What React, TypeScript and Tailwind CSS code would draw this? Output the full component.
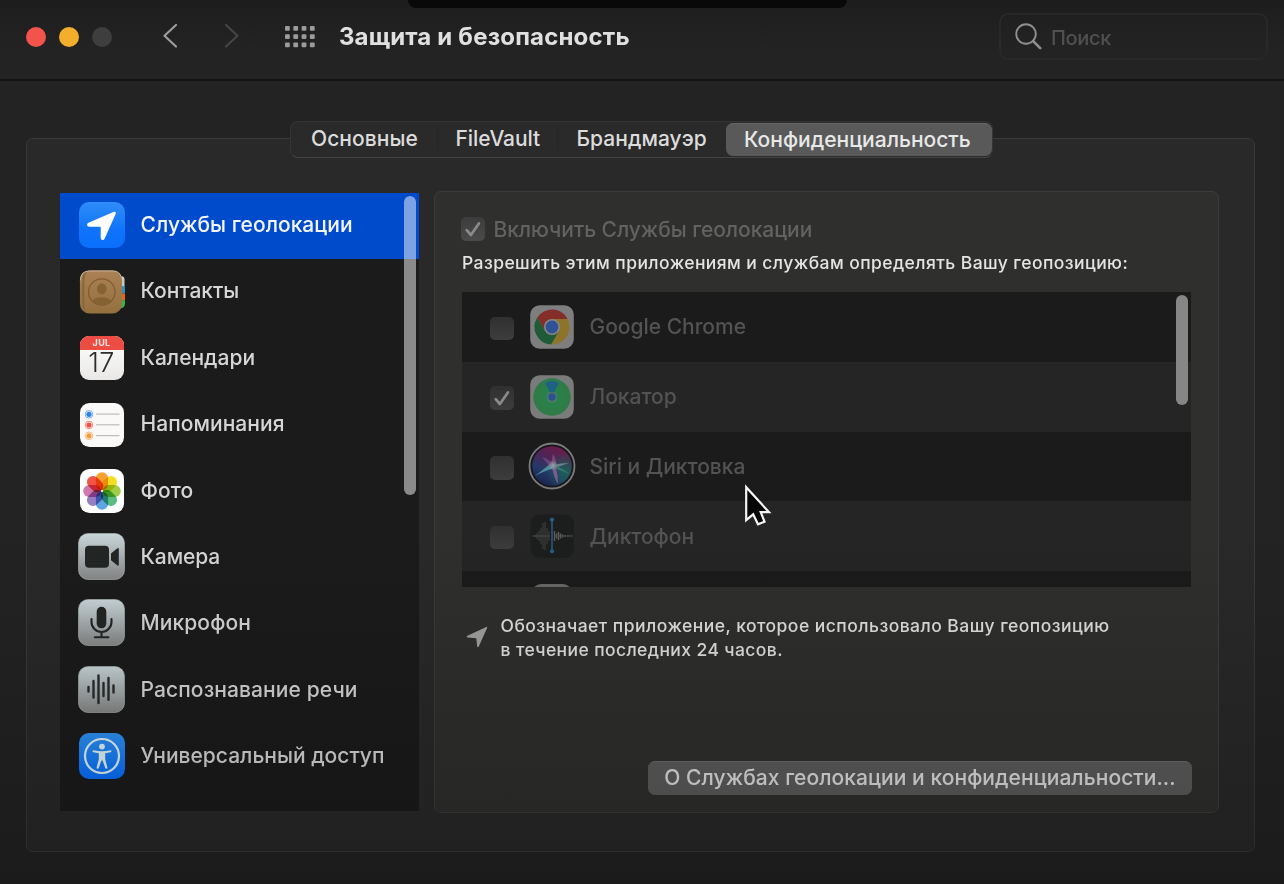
import React from "react";
import type { ReactNode } from "react";

/* ---------- sidebar icons ---------- */

function LocationIcon() {
  return (
    <svg viewBox="0 0 46 46" className="size-[46px]">
      <defs>
        <linearGradient id="loc" x1="0" y1="0" x2="0" y2="1">
          <stop offset="0" stopColor="#2f8df8" />
          <stop offset="0.6" stopColor="#0f74fb" />
          <stop offset="1" stopColor="#0a6ffb" />
        </linearGradient>
      </defs>
      <rect width="46" height="46" rx="10" fill="url(#loc)" />
      <path
        d="M35 9.800c1.200-.500 2.300.500 1.800 1.700L25.600 36.800c-.9 1.900-3.900 1.500-3.900-.8V25.500c0-.6-.2-.8-.8-.8H10.200c-2.400 0-2.800-3-.8-3.900z"
        fill="#fff"
      />
    </svg>
  );
}

function ContactsIcon() {
  return (
    <svg viewBox="0 0 48 46" className="h-[46px] w-[48px]">
      <defs>
        <linearGradient id="book" x1="0" y1="0" x2="0" y2="1">
          <stop offset="0" stopColor="#aa8154" />
          <stop offset="1" stopColor="#95703f" />
        </linearGradient>
        <clipPath id="person">
          <circle cx="24.300" cy="23" r="13" />
        </clipPath>
      </defs>
      <rect x="36" y="7" width="11.500" height="12" rx="3" fill="#c9cbc8" />
      <rect x="36" y="17" width="12" height="7.500" fill="#2f8fc4" />
      <rect x="36" y="24.500" width="12" height="7" fill="#e06a16" />
      <path d="M36 31.500h12v3.500q0 3.500-3.500 4.500h-8.500z" fill="#35b648" />
      <rect x="2" y="1" width="43" height="44" rx="10" fill="url(#book)" />
      <path d="M2.500 11Q2.500 1.600 11.500 1.500h24q7 0 8.500 6" stroke="#c9b79d" strokeWidth="1" fill="none" />
      <path d="M4.500 8q-1 15 0 30q1 4 4 5.500q-2-4-2-9.500V12q0-6 2.500-9.500q-3.500 1-4.500 5.500" fill="#8b673d" />
      <g clipPath="url(#person)" fill="#80602f" opacity="0.850">
        <ellipse cx="24.300" cy="19.800" rx="4.900" ry="5.700" />
        <ellipse cx="24.300" cy="33.500" rx="10" ry="5.200" />
      </g>
      <circle cx="24.300" cy="23" r="13.500" stroke="#7f5d31" strokeWidth="1.300" fill="none" />
    </svg>
  );
}

function CalendarIcon() {
  return (
    <div className="flex h-[44px] w-[44px] flex-col overflow-hidden rounded-[9px] bg-linear-to-b from-white to-[#e9e8e6]">
      <div className="flex h-[14px] items-center justify-center bg-[#ed4c43] text-[9px] leading-[14px] font-bold tracking-[0.300px] text-[#fbe9e8]">
        JUL
      </div>
      <div className="-mt-[2px] text-center text-[27px] leading-[29px] font-light tracking-[0.400px] text-[#2c2c2c]">17</div>
    </div>
  );
}

function RemindersIcon() {
  const rows = [
    { y: 11.300, c: "#2f82e4" },
    { y: 22, c: "#ea5348" },
    { y: 32.800, c: "#ef9c3c" },
  ];
  return (
    <svg viewBox="0 0 44 44" className="size-[44px]">
      <rect width="44" height="44" rx="9.500" fill="#faf9f8" />
      {rows.map((r) => (
        <g key={r.y}>
          <circle cx="9" cy={r.y} r="3.800" fill="none" stroke={r.c} strokeOpacity="0.700" strokeWidth="0.900" />
          <circle cx="9" cy={r.y} r="2.600" fill={r.c} />
          <rect x="16" y={r.y - 0.800} width="23.500" height="1.200" fill="#bdbcbb" />
        </g>
      ))}
    </svg>
  );
}

function PhotosIcon() {
  const petals = ["#f59a23", "#f2dc12", "#9ccb3c", "#4fb87a", "#559fe0", "#9076bd", "#cf6fa8", "#f04a3c"];
  return (
    <svg viewBox="0 0 44 44" className="size-[44px]">
      <rect width="44" height="44" rx="9.500" fill="#fff" />
      <g className="isolate">
        {petals.map((c, i) => (
          <rect
            key={c}
            x="15.900"
            y="3.200"
            width="12.200"
            height="18.200"
            rx="6.100"
            fill={c}
            fillOpacity="0.940"
            transform={`rotate(${i * 45} 22 22)`}
            className="mix-blend-multiply"
          />
        ))}
      </g>
      <circle cx="22" cy="22" r="1" fill="#fff" />
    </svg>
  );
}

function SilverTile({ children }: { children: ReactNode }) {
  return (
    <svg viewBox="0 0 47 47" className="-mt-[2px] size-[47px]">
      <defs>
        <linearGradient id="silver" x1="0" y1="0" x2="0" y2="1">
          <stop offset="0" stopColor="#cad7da" />
          <stop offset="0.500" stopColor="#a9b0b2" />
          <stop offset="1" stopColor="#868686" />
        </linearGradient>
      </defs>
      <rect x="0.500" y="0.500" width="46" height="46" rx="9.500" fill="url(#silver)" stroke="#b4bcbe" strokeOpacity="0.600" />
      {children}
    </svg>
  );
}

function CameraIcon() {
  return (
    <SilverTile>
      <rect x="7" y="12.700" width="24" height="22" rx="4" fill="#242626" />
      <path d="M33 20.500l5.800-4.800q2-1.500 2-.2v16.400q0 1.500-2 .2L33 27.300z" fill="#242626" />
    </SilverTile>
  );
}

function MicIcon() {
  return (
    <SilverTile>
      <rect x="18.700" y="7.800" width="9.600" height="21.500" rx="4.800" fill="#242626" />
      <path
        d="M13.500 20v3a10 10 0 0 0 20 0v-3M23.500 33v5M16.800 38.300h13.600"
        stroke="#242626"
        strokeWidth="2.100"
        strokeLinecap="round"
        fill="none"
      />
    </SilverTile>
  );
}

function SpeechIcon() {
  return (
    <SilverTile>
      <path
        d="M10.500 21v4.500M15.500 15v16.500M20.500 9.500v27.500M25.500 17v13M30.500 12v21.700M35.500 19.500v7"
        stroke="#2a2c2c"
        strokeWidth="2.400"
        strokeLinecap="round"
        fill="none"
      />
    </SilverTile>
  );
}

function AccessibilityIcon() {
  return (
    <svg viewBox="0 0 46 46" className="-mt-[1px] size-[46px]">
      <defs>
        <linearGradient id="acc" x1="0" y1="0" x2="0" y2="1">
          <stop offset="0" stopColor="#2f93f6" />
          <stop offset="1" stopColor="#0670ff" />
        </linearGradient>
      </defs>
      <rect width="46" height="46" rx="10" fill="url(#acc)" />
      <circle cx="23" cy="23" r="17" fill="none" stroke="#e4f6f6" strokeWidth="2.200" />
      <circle cx="23" cy="13.600" r="2.900" fill="#e4f6f6" />
      <path
        d="M14.600 17.300q8.400 2 16.800 0q1 0 1 .9t-.9 1.100l-5.300 1v6l2.200 8.200q.2 1.100-.8 1.300t-1.400-.8L23.600 27.400h-1.200l-2.600 7.600q-.4 1-1.400.8t-.8-1.300l2.200-8.200v-6l-5.300-1q-.9-.2-.9-1.100t1-.9z"
        fill="#e4f6f6"
      />
    </svg>
  );
}

/* ---------- app icons ---------- */

function ChromeIcon() {
  return (
    <svg viewBox="-22 -22 44 44" className="size-[44px]">
      <rect x="-21.800" y="-21.800" width="43.600" height="43.600" rx="9.500" fill="#7e7e7e" />
      <path d="M-14.710-9.480A17.500 17.500 0 0 1 15.560-8L0-8L-6.930 4z" fill="#852d29" />
      <path d="M15.560-8A17.500 17.500 0 0 1-.85 17.480L6.930 4L0-8z" fill="#8e7428" />
      <path d="M-.85 17.480A17.500 17.500 0 0 1-14.710-9.480L-6.930 4L6.930 4z" fill="#1f5c35" />
      <circle r="8" fill="#878787" />
      <circle r="6.400" fill="#2f5196" />
    </svg>
  );
}

function FindMyIcon() {
  return (
    <svg viewBox="-22 -22 44 44" className="size-[44px]">
      <rect x="-21.800" y="-21.800" width="43.600" height="43.600" rx="9.500" fill="#7a7c7b" />
      <circle r="18.700" fill="#2f7c49" />
      <circle r="12" fill="#2a8049" />
      <path d="M0 0L-6.800-14Q0-18 6.800-14z" fill="#1d6285" />
      <circle r="5.200" fill="#7d8f8a" />
      <circle r="3.700" fill="#28538f" />
      <circle r="4.400" fill="none" stroke="#284d52" strokeWidth="0.700" />
    </svg>
  );
}

function SiriIcon() {
  return (
    <svg viewBox="-24 -24 48 48" className="size-[48px]">
      <defs>
        <linearGradient id="siri" x1="0.700" y1="0" x2="0.250" y2="1">
          <stop offset="0" stopColor="#6b1c48" />
          <stop offset="0.350" stopColor="#4f2457" />
          <stop offset="0.650" stopColor="#233a68" />
          <stop offset="1" stopColor="#17244d" />
        </linearGradient>
        <radialGradient id="teal" cx="0.850" cy="0.650" r="0.500">
          <stop offset="0" stopColor="#1c6157" />
          <stop offset="1" stopColor="#1c6157" stopOpacity="0" />
        </radialGradient>
        <radialGradient id="glow">
          <stop offset="0" stopColor="#98a3ab" />
          <stop offset="1" stopColor="#98a3ab" stopOpacity="0" />
        </radialGradient>
        <filter id="soft">
          <feGaussianBlur stdDeviation="0.500" />
        </filter>
      </defs>
      <circle r="22.500" fill="#17161c" stroke="#7c7c7c" strokeWidth="1.800" />
      <circle r="19.800" fill="url(#siri)" />
      <circle r="19.800" fill="url(#teal)" />
      <g filter="url(#soft)">
        <path d="M-17.500 10.500L-2-2L3 2Q-8 4.500-17.500 10.500z" fill="#4f8c9b" />
        <path d="M-10-9Q0-6 3 0L-2 1z" fill="#744d82" opacity="0.700" />
        <path d="M1-12Q5-6 4 1L-1-1z" fill="#86507c" opacity="0.800" />
        <path d="M17-3Q8-3 2-1l1 3z" fill="#68808c" />
        <path d="M18 8Q10 5 1 1.500l1-3.500z" fill="#39796f" />
        <path d="M6 18Q6 8 3.500 0L0 1Q2 12 6 18z" fill="#795b94" />
      </g>
      <circle cx="1" cy="-0.500" r="5" fill="url(#glow)" />
    </svg>
  );
}

function VoiceMemosIcon() {
  return (
    <svg viewBox="-22 -22 44 44" className="size-[44px]">
      <rect x="-21.500" y="-21.500" width="43.500" height="43.500" rx="9.500" fill="#1c1d1d" />
      <path
        d="M-19-.7v1.400M-17-1v2M-15-3v6M-13-5v10M-11-8v16M-9-13v26M-7-14v28M-5-8v16M-3-5v10"
        stroke="#343636"
        strokeWidth="1.500"
      />
      <path d="M2.500-5v10M4.500-2.500v5M6.500-4v8M8.500-2.500v5M10.500-1.500v3M13-1v2M16-.8v1.600M19-.5v1" stroke="#5a5e5e" strokeWidth="1.400" />
      <path d="M-19 0H-2M2 0H21" stroke="#4a4c4c" strokeWidth="0.900" />
      <path d="M0-16V15" stroke="#285d83" strokeWidth="1.500" />
      <circle cy="-16.300" r="2.100" fill="#285d83" />
      <circle cy="15.300" r="2.100" fill="#285d83" />
    </svg>
  );
}

function Checkbox({ checked, className = "" }: { checked: boolean; className?: string }) {
  return (
    <span
      className={`flex size-[23.500px] shrink-0 items-center justify-center rounded-[5px] bg-linear-to-b ${className}`}
    >
      {checked && (
        <svg viewBox="0 0 22 22" className="size-[22px]">
          <path d="M4.700 12.200l4.200 4.800L16.900 5.400" fill="none" stroke="#8a8a8a" strokeWidth="2.700" strokeLinecap="round" strokeLinejoin="round" />
        </svg>
      )}
    </span>
  );
}

/* ---------- data ---------- */

const sections: { label: string; icon: ReactNode; tracking: string }[] = [
  { label: "Службы геолокации", icon: <LocationIcon />, tracking: "tracking-[0.030px]" },
  { label: "Контакты", icon: <ContactsIcon />, tracking: "" },
  { label: "Календари", icon: <CalendarIcon />, tracking: "" },
  { label: "Напоминания", icon: <RemindersIcon />, tracking: "tracking-[0.050px]" },
  { label: "Фото", icon: <PhotosIcon />, tracking: "tracking-[0.100px]" },
  { label: "Камера", icon: <CameraIcon />, tracking: "tracking-[-0.100px]" },
  { label: "Микрофон", icon: <MicIcon />, tracking: "tracking-[0.100px]" },
  { label: "Распознавание речи", icon: <SpeechIcon />, tracking: "tracking-[0.100px]" },
  { label: "Универсальный доступ", icon: <AccessibilityIcon />, tracking: "" },
];

const apps: { label: string; icon: ReactNode; on: boolean }[] = [
  { label: "Google Chrome", icon: <ChromeIcon />, on: false },
  { label: "Локатор", icon: <FindMyIcon />, on: true },
  { label: "Siri и Диктовка", icon: <SiriIcon />, on: false },
  { label: "Диктофон", icon: <VoiceMemosIcon />, on: false },
];

/* ---------- page ---------- */

function Toolbar() {
  return (
    <header className="flex h-[81px] shrink-0 items-start border-b-2 border-[#161616] bg-linear-to-b from-[#1d1d1d] to-[#232323] to-60% pl-[25.500px] pr-[16px]">
      <div className="mt-[26.500px] flex gap-[13.200px]">
        <span className="size-[20px] rounded-full bg-[#f2534b]" />
        <span className="size-[20px] rounded-full bg-[#f3af2c]" />
        <span className="size-[20px] rounded-full bg-[#3e3e3e]" />
      </div>
      <svg viewBox="0 0 14 24" className="mt-[24px] ml-[51px] h-[24px] w-[14px]">
        <path d="M13 1L1.500 11.700L13 22.500" fill="none" stroke="#9c9c9c" strokeWidth="2.200" strokeLinecap="round" strokeLinejoin="round" />
      </svg>
      <svg viewBox="0 0 14 24" className="mt-[24px] ml-[48px] h-[24px] w-[14px]">
        <path d="M1 1L12.500 11.700L1 22.500" fill="none" stroke="#454545" strokeWidth="2.200" strokeLinecap="round" strokeLinejoin="round" />
      </svg>
      <svg viewBox="0 0 30 22" className="mt-[25.500px] ml-[46px] h-[22px] w-[30px]" fill="#9b9b9b">
        {Array.from({ length: 12 }, (_, i) => (
          <rect key={i} x={(i % 4) * 8.300} y={Math.floor(i / 4) * 8.200} width="4.800" height="4.800" rx="1" />
        ))}
      </svg>
      <h1 className="mt-[22px] ml-[24px] text-[24px] leading-[30px] font-bold tracking-[0.180px] text-[#e0e0e0]">Защита и безопасность</h1>
      <div className="mt-[13px] ml-auto flex h-[47px] w-[269px] items-center rounded-[9px] border-2 border-[#282828] pl-[14px]">
        <svg viewBox="0 0 27 27" className="size-[27px]">
          <circle cx="11" cy="11" r="9.800" fill="none" stroke="#8f8f8f" strokeWidth="1.900" />
          <path d="M18.200 18.200l7 7" stroke="#8f8f8f" strokeWidth="2.600" strokeLinecap="round" />
        </svg>
        <span className="mt-[3px] ml-[9px] text-[20px] leading-[24px] font-medium tracking-[-0.300px] text-[#505050]">Поиск</span>
      </div>
    </header>
  );
}

function Tabs() {
  return (
    <nav className="relative z-10 mx-auto flex h-[37px] w-[703px] -translate-x-px items-stretch rounded-[8px] border border-[#353535] border-b-[#454545] bg-[#2a2a2a] text-[21px] leading-[33px] font-medium text-[#dcdcdc]">
      <span className="w-[146px] pl-[20.500px] tracking-[0.060px]">Основные</span>
      <span className="my-[7px] w-px bg-[#262626]" />
      <span className="w-[119px] pl-[18px] tracking-[-0.070px]">FileVault</span>
      <span className="my-[7px] w-px bg-[#262626]" />
      <span className="w-[168px] pl-[19px] tracking-[0.030px]">Брандмауэр</span>
      <span className="my-px flex-1 rounded-[7px] border-t border-[#666666] bg-[#595959] pl-[18.500px] leading-[31px] text-[#e8e8e8]">
        Конфиденциальность
      </span>
    </nav>
  );
}

function Sidebar() {
  return (
    <aside className="relative mt-[2px] h-[618px] w-[359px] shrink-0 bg-[#1b1b1b]">
      <ul>
        {sections.map((s, i) => (
          <li
            key={s.label}
            className={`flex h-[66.400px] items-center pb-[1.500px] ${i === 0 ? "bg-[#004bcb] text-[#f2f5fb]" : "text-[#d6d6d6]"}`}
          >
            <span className="ml-[18px] flex w-[47px] shrink-0 justify-center">{s.icon}</span>
            <span className={`-mt-[1px] ml-[15.500px] text-[21px] leading-[26px] font-medium whitespace-nowrap ${s.tracking}`}>{s.label}</span>
          </li>
        ))}
      </ul>
      <div className="absolute top-[3px] left-[344px] h-[299px] w-[12px] rounded-full bg-white/49" />
    </aside>
  );
}

function AppList() {
  return (
    <div className="relative mt-[17.500px] ml-[27px] h-[295px] w-[729px] overflow-hidden bg-[#1b1b1b]">
      {apps.map((a, i) => (
        <div key={a.label} className={`flex h-[69.750px] items-center ${i % 2 ? "bg-[#252525]" : "bg-[#1b1b1b]"}`}>
          <Checkbox checked={a.on} className="mt-[3px] ml-[28px] from-[#303030] to-[#3d3d3d]" />
          <span className="ml-[13px] flex w-[50px] shrink-0 justify-center">{a.icon}</span>
          <span className="mt-[1px] ml-[13px] text-[21px] leading-[26px] font-medium tracking-[-0.020px] text-[#535353]">{a.label}</span>
        </div>
      ))}
      <div className="mt-[13px] ml-[70px] h-[40px] w-[40px] rounded-[9px] bg-[#686868]" />
      <div className="absolute top-[3px] left-[713.500px] h-[110px] w-[12px] rounded-full bg-[#868686]" />
    </div>
  );
}

function Details() {
  return (
    <section className="ml-[15px] flex h-[622px] w-[785px] flex-col rounded-[7px] border border-[#3c3c3b] bg-[#2f2f2d]">
      <div className="mt-[25px] ml-[26px] flex items-center">
        <Checkbox checked className="-mt-[2px] from-[#3c3c3c] to-[#4b4b4b]" />
        <span className="ml-[9px] text-[21px] leading-[26px] font-medium tracking-[-0.060px] text-[#626261]">Включить Службы геолокации</span>
      </div>
      <p className="mt-[7.500px] ml-[27px] text-[17.500px] leading-[24px] font-medium tracking-[0.425px] whitespace-nowrap text-[#e4e4e3]">
        Разрешить этим приложениям и службам определять Вашу геопозицию:
      </p>
      <AppList />
      <div className="mt-[27px] ml-[31px] flex">
        <svg viewBox="0 0 22 22" className="mt-[12px] size-[22px]">
          <path d="M20.300 1q1.300-.500.800.9L12.800 20.600q-1.100 1.500-1.700-.3L10.300 12.200L1.700 11.500q-1.900-.6-.3-1.700z" fill="#a0a09f" />
        </svg>
        <p className="ml-[12.500px] text-[17.500px] leading-[23.500px] font-medium tracking-[0.440px] whitespace-nowrap text-[#e0e0df]">
          <span className="tracking-[0.465px]">Обозначает приложение, которое использовало Вашу геопозицию</span>
          <br />
          <span className="tracking-[0.400px]">в течение последних 24 часов.</span>
        </p>
      </div>
      <button className="mt-auto mr-[26px] mb-[17px] flex h-[34px] w-[544px] items-center justify-center self-end rounded-[7px] border-t border-[#6e6e6e] bg-[#5c5c5c] pb-[2px] text-[21px] leading-[26px] font-medium tracking-[0.060px] whitespace-nowrap text-[#e0e0e0]">
        О Службах геолокации и конфиденциальности...
      </button>
    </section>
  );
}

export default function App() {
  return (
    <div className="relative flex h-[884px] w-[1284px] flex-col overflow-hidden bg-[#232323] font-['Inter','Noto_Sans',sans-serif]">
      <Toolbar />
      <main className="flex flex-col pt-[40px]">
        <Tabs />
        <div className="-mt-[20px] ml-[26px] flex h-[714px] w-[1229px] items-start rounded-[7px] border border-[#393939] bg-[#292929] pt-[52px] pl-[33px]">
          <Sidebar />
          <Details />
        </div>
      </main>

      {/* camera cut-out at the top edge */}
      <div className="absolute top-0 left-[408px] h-[8px] w-[439px] rounded-b-[16px] bg-[#090909]" />

      {/* shading towards the bottom edge */}
      <div className="pointer-events-none absolute inset-x-0 bottom-0 h-[360px] bg-linear-to-b from-black/0 to-black/22" />

      {/* pointer */}
      <svg viewBox="0 0 28 44" className="absolute top-[484px] left-[744px] h-[44px] w-[28px]">
        <path
          d="M2.200 3.200V36.200L9.200 30.300L14 40.300L20.500 37.700L16.700 28.200H25z"
          fill="#060606"
          stroke="#f4f4f4"
          strokeWidth="2.200"
          strokeLinejoin="miter"
        />
      </svg>
    </div>
  );
}
